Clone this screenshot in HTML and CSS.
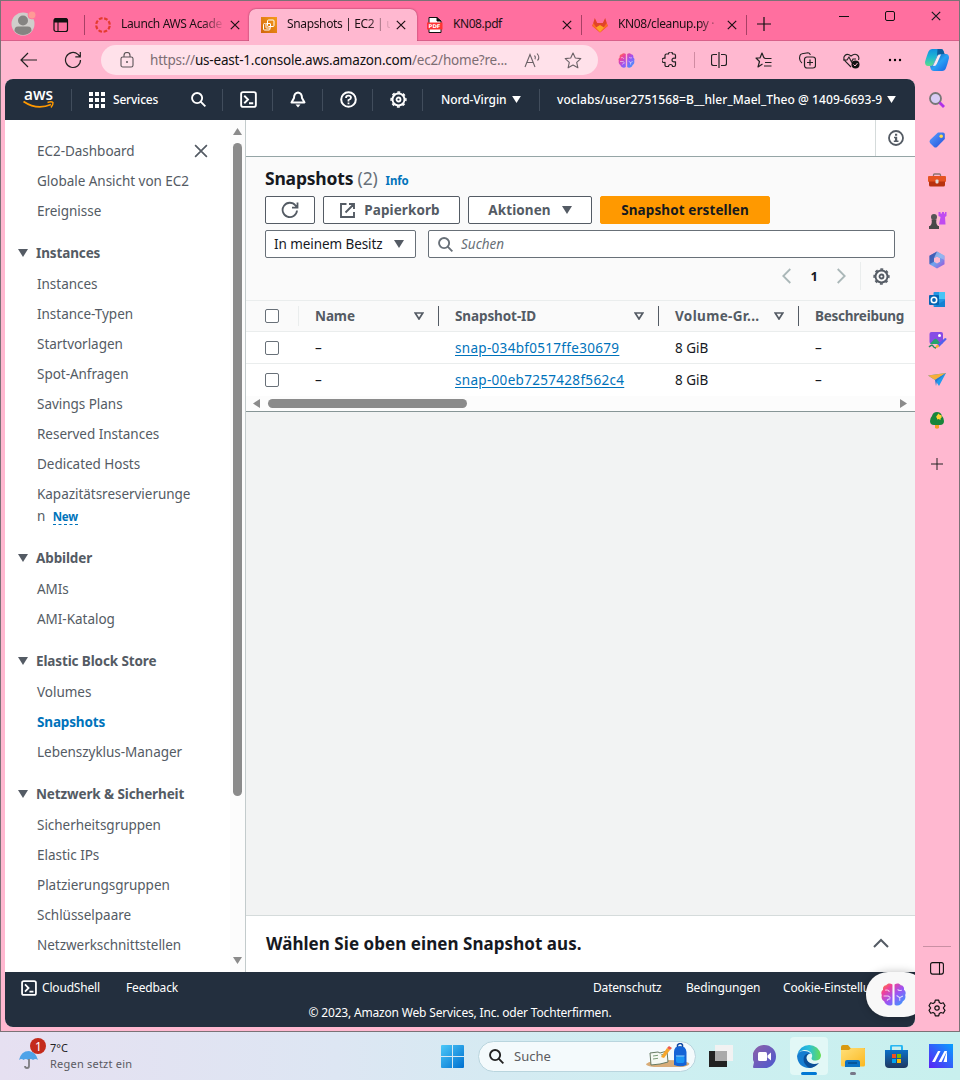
FILE: index.html
```html
<!DOCTYPE html>
<html lang="de">
<head>
<meta charset="utf-8">
<title>Snapshots | EC2</title>
<link rel="stylesheet" href="styles.css">
</head>
<body>
<svg class="defs" width="0" height="0">
  <defs>
    <linearGradient id="g-brain" x1="0" y1="0" x2="1" y2="1"><stop offset="0" stop-color="#ff8a2a"/><stop offset=".25" stop-color="#f0409a"/><stop offset=".55" stop-color="#9a55f5"/><stop offset="1" stop-color="#2aa5ff"/></linearGradient>
    <linearGradient id="g-cop1" x1="0" y1="0" x2="0" y2="1"><stop offset="0" stop-color="#1190e0"/><stop offset=".5" stop-color="#20b8d0"/><stop offset="1" stop-color="#5ddc8a"/></linearGradient>
    <linearGradient id="g-cop2" x1="0" y1="0" x2="1" y2="1"><stop offset="0" stop-color="#0a4f9a"/><stop offset=".5" stop-color="#2aa0f5"/><stop offset="1" stop-color="#1560e0"/></linearGradient>
    <linearGradient id="g-blue" x1="0" y1="0" x2="1" y2="1"><stop offset="0" stop-color="#5aa0ff"/><stop offset="1" stop-color="#2350d8"/></linearGradient>
    <linearGradient id="g-ec2" x1="0" y1="1" x2="1" y2="0"><stop offset="0" stop-color="#d0660a"/><stop offset="1" stop-color="#f79a1c"/></linearGradient>
    <linearGradient id="g-m365" x1="0" y1="0" x2="1" y2="1"><stop offset="0" stop-color="#3a55b8"/><stop offset=".5" stop-color="#6fa6ee"/><stop offset="1" stop-color="#a04bd8"/></linearGradient>
    <linearGradient id="g-win" x1="0" y1="0" x2="1" y2="1"><stop offset="0" stop-color="#4cc8f8"/><stop offset="1" stop-color="#0070d0"/></linearGradient>
    <linearGradient id="g-edge" x1="0" y1="0" x2="1" y2="0"><stop offset="0" stop-color="#1b9de0"/><stop offset=".5" stop-color="#2cc0d8"/><stop offset="1" stop-color="#66dd50"/></linearGradient>
    <linearGradient id="g-chat" x1="0" y1="0" x2="1" y2="1"><stop offset="0" stop-color="#8f62a8"/><stop offset="1" stop-color="#4a58d0"/></linearGradient>
    <linearGradient id="g-m" x1="0" y1="1" x2="1" y2="0"><stop offset="0" stop-color="#5a20f5"/><stop offset="1" stop-color="#08a0ff"/></linearGradient>
    <linearGradient id="g-store" x1="0" y1="0" x2="0" y2="1"><stop offset="0" stop-color="#0a70c8"/><stop offset="1" stop-color="#203860"/></linearGradient>
    <linearGradient id="g-folder" x1="0" y1="0" x2="1" y2="1"><stop offset="0" stop-color="#ffe07a"/><stop offset="1" stop-color="#fbb820"/></linearGradient>
  </defs>
  <symbol id="brain" viewBox="0 0 24 22">
    <path fill="url(#g-brain)" d="M11 1.500C9 0 6.500 0 5 2 2.500 2 1.500 4.500 2 6.500 0 8 0 10 .8 11.500 0 14 1 16.500 3 17.500 4 21 8.500 23 11 20.500zM13 1.500C15 0 17.500 0 19 2c2.500 0 3.500 2.500 3 4.500 2 1.500 2 3.500 1.200 5 .8 2.500-.2 5-2.200 6-1 3.500-5.500 5.500-8 3z"/>
    <path fill="none" stroke="#fff" stroke-opacity=".75" stroke-width="1" d="M4 7c2-1 3.500 0 4 1.500M2.500 12.500H7l2 1.500M6 17c0-1.500 1-2 3-2M20 7c-2 .3-3.500.5-4-1M21 12.500l-3 1.500-3-2M18 17v-3"/>
  </symbol>
  <symbol id="shell" viewBox="0 0 18 18"><rect x="1.200" y="1.200" width="15.600" height="15.600" rx="2" fill="none" stroke="currentColor" stroke-width="2"/><path d="M4.500 5l4 4-4 4M9.500 13H14" fill="none" stroke="currentColor" stroke-width="2"/></symbol>
  <symbol id="gear" viewBox="0 0 17 17"><g fill="none" stroke="currentColor"><circle cx="8.500" cy="8.500" r="6" stroke-width="1.900"/><circle cx="8.500" cy="8.500" r="7.400" stroke-width="1.500" stroke-dasharray="2.900 2.912" transform="rotate(-11 8.500 8.500)"/><circle cx="8.500" cy="8.500" r="2" stroke-width="1.800"/></g></symbol>
  <symbol id="close" viewBox="0 0 10 10"><path d="M.8.8l8.400 8.400M9.200.8L.8 9.200" stroke="currentColor" fill="none" stroke-width="1.200"/></symbol>
  <symbol id="caret" viewBox="0 0 10 8"><path d="M0 0h10L5 8z" fill="currentColor"/></symbol>
  <symbol id="sort" viewBox="0 0 10 8"><path d="M1.200 1h7.600L5 7z" fill="none" stroke="currentColor" stroke-width="1.700"/></symbol>
  <symbol id="search" viewBox="0 0 16 16"><circle cx="6.500" cy="6.500" r="5.400" fill="none" stroke="currentColor" stroke-width="2"/><path d="M10.300 10.300L15.300 15.300" stroke="currentColor" stroke-width="2"/></symbol>
</svg>

<div class="window">
  <div class="tabstrip">
    <div class="profile">
      <svg width="26" height="26" viewBox="0 0 26 26"><circle cx="12" cy="14" r="11.500" fill="#d0cecb"/><circle cx="12" cy="10.500" r="5" fill="#858482"/><path d="M3.500 21c0-4 2-4.500 4-4.500h9c2 0 4 .5 4 4.500a11 11 0 0 1-17 0z" fill="#858482"/><circle cx="21" cy="5" r="4" fill="#ff9a96" stroke="#ff6f9f" stroke-width=".8"/></svg>
    </div>
    <div class="workspace">
      <svg width="16" height="16" viewBox="0 0 16 16"><rect x="1" y="1.500" width="13.500" height="13" rx="2" fill="none" stroke="#111" stroke-width="1.200"/><path d="M1 2.500Q1 1 3 1h9.500Q14.500 1 14.500 3v2.500H1z" fill="#111"/><path d="M5 5v9" stroke="#111"/></svg>
    </div>
    <div class="tab tab-first">
      <svg width="16" height="16" viewBox="0 0 16 16"><circle cx="8" cy="8" r="6.800" fill="none" stroke="#e43b2f" stroke-width="2.200" stroke-dasharray="3.700 1.640" transform="rotate(8 8 8)"/></svg>
      <span class="tab-title fade">Launch AWS Acade</span>
      <svg class="x" width="10" height="10"><use href="#close"/></svg>
    </div>
    <div class="tab tab-active">
      <svg width="16" height="16" viewBox="0 0 16 16"><rect width="16" height="16" fill="url(#g-ec2)"/><g fill="none" stroke="#fff" stroke-width="1"><rect x="6.500" y="3" width="6.500" height="6.500" rx="1"/><path d="M4.500 6.500H3.500q-1 0-1 1v4.500q0 1 1 1H8q1 0 1-1v-1"/><rect x="5" y="6.500" width="4.500" height="4.500" rx=".5"/></g></svg>
      <span class="tab-title fade">Snapshots | EC2 | us</span>
      <svg class="x" width="10" height="10"><use href="#close"/></svg>
    </div>
    <div class="tab">
      <svg width="16" height="16" viewBox="0 0 16 16"><path d="M2 .5h8L14 4v11.500H2z" fill="#fff" stroke="#111"/><path d="M10 .5V4h4" fill="#111" stroke="#111"/><rect y="5.500" width="15.500" height="7" fill="#f33"/><text x="1.500" y="11" textLength="12" lengthAdjust="spacingAndGlyphs" class="pdf">PDF</text></svg>
      <span class="tab-title plain">KN08.pdf</span>
      <svg class="x" width="10" height="10"><use href="#close"/></svg>
    </div>
    <div class="tab tab-sep">
      <svg width="16" height="16" viewBox="0 0 16 16"><path d="M.3 9L2.800 1l2.400 5h5.600l2.400-5 2.500 8L8 15.500z" fill="#e24329"/><path d="M.3 9l1-3L8 15.500zM15.700 9l-1-3L8 15.500z" fill="#fc6d26"/><path d="M4 10.500L8 8l4 2.500-4 5z" fill="#fca326"/></svg>
      <span class="tab-title fade">KN08/cleanup.py ·</span>
      <svg class="x" width="10" height="10"><use href="#close"/></svg>
    </div>
    <div class="newtab"><svg width="14" height="14" viewBox="0 0 14 14"><path d="M7 0v14M0 7h14" stroke="#111" stroke-width="1.200"/></svg></div>
    <div class="winctl">
      <svg width="10" height="10"><path d="M0 5.500h10" stroke="#111"/></svg>
      <svg width="10" height="10"><rect x=".5" y=".5" width="9" height="9" rx="1.500" fill="none" stroke="#111"/></svg>
      <svg width="10" height="10"><use href="#close"/></svg>
    </div>
  </div>

  <div class="toolbar">
    <div class="tool"><svg width="18" height="16" viewBox="0 0 18 16"><path d="M8 1L1 8l7 7M1 8h16" fill="none" stroke="#222" stroke-width="1.200"/></svg></div>
    <div class="tool"><svg width="18" height="18" viewBox="0 0 18 18"><path d="M16.500 9A7.500 7.500 0 1 1 14 3.400L16 5.500M16.300 1v4.800h-5" fill="none" stroke="#222" stroke-width="1.200"/></svg></div>
    <div class="address">
      <svg class="lock" width="14" height="16" viewBox="0 0 14 16"><rect x="1" y="5" width="12" height="10" rx="1.800" fill="none" stroke="#5c5458" stroke-width="1.100"/><path d="M4 5V3.500a3 3 0 0 1 6 0V5" fill="none" stroke="#5c5458" stroke-width="1.100"/><circle cx="7" cy="10" r="1" fill="#5c5458"/></svg>
      <span class="url">https://<b>us-east-1.console.aws.amazon.com</b>/ec2/home?re...</span>
      <svg class="read" width="18" height="16" viewBox="0 0 18 16"><path d="M1 15L6 2.500 11 15M3 10.500h6M10.500 3.500q1.500 1.500.5 3.700M13 1.500q3.500 4 .5 7" fill="none" stroke="#6b6267" stroke-width="1.100"/></svg>
      <svg class="star" width="18" height="17" viewBox="0 0 18 17"><path d="M9 1l2.300 5 5.500.6-4.100 3.700 1.200 5.500L9 13l-4.900 2.800 1.200-5.500L1.200 6.600l5.500-.6z" fill="none" stroke="#6b6267" stroke-width="1.100" stroke-linejoin="round"/></svg>
    </div>
    <div class="tool"><svg width="17" height="15"><use href="#brain"/></svg></div>
    <div class="tool"><svg width="16" height="16" viewBox="0 0 16 16"><path d="M4.500 2H6.500a2 2 0 0 1 4 0H12q1.500 0 1.500 1.500v2.700h-1a1.900 1.900 0 1 0 0 3.600h1v3.200q0 1.500-1.500 1.500h-1.500a2 2 0 0 0-4 0h-2Q3 14.500 3 13v-2.700a2.200 2.200 0 1 1 0-4V3.500Q3 2 4.500 2z" fill="none" stroke="#222" stroke-width="1.200" stroke-linejoin="round"/></svg></div>
    <div class="tooldiv"></div>
    <div class="tool split-icon"><svg width="16" height="16" viewBox="0 0 16 16"><path d="M6 2.500H2.500q-2 0-2 2v7q0 2 2 2H6M10 2.500h3.500q2 0 2 2v7q0 2-2 2H10M8 0v16" fill="none" stroke="#222" stroke-width="1.200"/></svg></div>
    <div class="tool"><svg width="17" height="16" viewBox="0 0 17 16"><path d="M10 6.500L8.800 5.500 7 1 5 6H1l3.500 3.500L3 15l4.500-3M10 6.500h6.500M10 10.500h6.500M9 14h7.500" fill="none" stroke="#222" stroke-width="1.200" stroke-linejoin="round"/></svg></div>
    <div class="tool"><svg width="17" height="17" viewBox="0 0 17 17"><path d="M3 11Q.5 9 .5 6L1 3.500Q1.500 2 3 1.800l6-1q2 0 2.300 2.200" fill="none" stroke="#222" stroke-width="1.100"/><rect x="5.500" y="5" width="11" height="11" rx="2.500" fill="none" stroke="#222" stroke-width="1.200"/><path d="M11 7.500v6M8 10.500h6" stroke="#222" stroke-width="1.200"/></svg></div>
    <div class="tool"><svg width="17" height="17" viewBox="0 0 17 17"><path d="M8 15L2 9C-1 5 3 0 8 4c5-4 9 0 7.500 4M0 8h4l2-3 2.500 5L10 7h3" fill="none" stroke="#222" stroke-width="1.100"/><circle cx="12.500" cy="12.500" r="4" fill="#111"/><path d="M10.500 12.500l1.500 1.500 2.500-3" fill="none" stroke="#ffb8d0"/></svg></div>
    <div class="tool"><svg width="14" height="4"><circle cx="2" cy="2" r="1.200"/><circle cx="7" cy="2" r="1.200"/><circle cx="12" cy="2" r="1.200"/></svg></div>
    <div class="tool copilot"><svg width="24" height="24" viewBox="0 0 24 24"><path d="M7 1h9q2 0 2.500 2l1 3h-5q-2 0-3 3L9 15q-1 3-4 3H3q-3 0-3-4Q2 7 3.500 3.500 4.500 1 7 1z" fill="url(#g-cop1)"/><path d="M17 23H9q-3 0-3.500-3L5 18q3 0 4-3l2.500-6q1-3 3-3H21q3 0 3 4-1.500 6-3 10-1 3-4 3z" fill="url(#g-cop2)"/><path d="M12.500 1H16q2 0 2.500 2l1 3h-5q-1.500 0-2.500 2z" fill="#0f5c9c"/><path d="M12.500 8q.5-1.500 2.500-1.500h1l-4 9q-1 2.500-3 2.500H8z" fill="#fde8ee"/></svg></div>
  </div>

  <div class="body">
    <div class="app">
      <header class="awsnav">
        <div class="cell logo"><svg width="32" height="21" viewBox="0 0 32 21"><text x="1" y="10.500" textLength="29" lengthAdjust="spacingAndGlyphs" class="awstext">aws</text><path d="M.5 12.500q13.500 9 27.500 3" fill="none" stroke="#f90" stroke-width="1.800"/><path d="M24.500 13.500q4-1.500 5.500 0 .3 2-2 5" fill="none" stroke="#f90" stroke-width="1.400"/></svg></div>
        <div class="cell services"><svg width="16" height="16" viewBox="0 0 16 16"><path d="M0 0h4v4H0zM6 0h4v4H6zM12 0h4v4h-4zM0 6h4v4H0zM6 6h4v4H6zM12 6h4v4h-4zM0 12h4v4H0zM6 12h4v4H6zM12 12h4v4h-4z" fill="#fff"/></svg><span>Services</span></div>
        <div class="cell icon find"><svg width="15" height="15"><use href="#search"/></svg></div>
        <div class="cell icon"><svg width="17" height="17"><use href="#shell"/></svg></div>
        <div class="cell icon"><svg width="16" height="17" viewBox="0 0 16 17"><path d="M8 1.500Q12 2 12 7l2.500 4.500h-13L4 7q0-5 4-5.500z" fill="none" stroke="#fff" stroke-width="2" stroke-linejoin="round"/><path d="M5.500 13.500h5L8 16.500z" fill="#fff"/></svg></div>
        <div class="cell icon"><svg width="17" height="17" viewBox="0 0 17 17"><circle cx="8.500" cy="8.500" r="7.300" fill="none" stroke="#fff" stroke-width="2"/><path d="M6 7q0-2.300 2.500-2.300T11 6.800Q11 8 8.500 9v1.500M8.500 11.500v1.700" fill="none" stroke="#fff" stroke-width="1.800"/></svg></div>
        <div class="cell icon"><svg width="17" height="17"><use href="#gear"/></svg></div>
        <div class="cell region"><span>Nord-Virgin</span><svg width="9" height="7"><use href="#caret"/></svg></div>
        <div class="cell account"><span>voclabs/user2751568=B__hler_Mael_Theo @ 1409-6693-9</span><svg width="9" height="7"><use href="#caret"/></svg></div>
      </header>

      <div class="content">
        <nav class="sidenav">
          <div class="navlist">
            <div class="navtop"><a class="item">EC2-Dashboard</a><svg width="14" height="14"><use href="#close"/></svg></div>
            <a class="item">Globale Ansicht von EC2</a>
            <a class="item">Ereignisse</a>
            <h3><svg width="10" height="8"><use href="#caret"/></svg>Instances</h3>
            <a class="item">Instances</a>
            <a class="item">Instance-Typen</a>
            <a class="item">Startvorlagen</a>
            <a class="item">Spot-Anfragen</a>
            <a class="item">Savings Plans</a>
            <a class="item">Reserved Instances</a>
            <a class="item">Dedicated Hosts</a>
            <a class="item">Kapazitätsreservierunge<br>n <span class="new">New</span></a>
            <h3><svg width="10" height="8"><use href="#caret"/></svg>Abbilder</h3>
            <a class="item">AMIs</a>
            <a class="item">AMI-Katalog</a>
            <h3><svg width="10" height="8"><use href="#caret"/></svg>Elastic Block Store</h3>
            <a class="item">Volumes</a>
            <a class="item current">Snapshots</a>
            <a class="item">Lebenszyklus-Manager</a>
            <h3><svg width="10" height="8"><use href="#caret"/></svg>Netzwerk &amp; Sicherheit</h3>
            <a class="item">Sicherheitsgruppen</a>
            <a class="item">Elastic IPs</a>
            <a class="item">Platzierungsgruppen</a>
            <a class="item">Schlüsselpaare</a>
            <a class="item">Netzwerkschnittstellen</a>
          </div>
          <div class="vscroll">
            <svg width="9" height="7" viewBox="0 0 9 7"><path d="M0 7L4.500 0 9 7z" fill="#8b8b8b"/></svg>
            <div class="vthumb"></div>
            <svg width="9" height="7" viewBox="0 0 9 7"><path d="M0 0l4.500 7L9 0z" fill="#8b8b8b"/></svg>
          </div>
        </nav>

        <main class="main">
          <div class="crumbs"><div class="infobtn"><svg width="16" height="16" viewBox="0 0 16 16"><circle cx="8" cy="8" r="7" fill="none" stroke="currentColor" stroke-width="1.800"/><path d="M7 3.800h2.200v2H7zM6 6.800h3.200v3.800h1.300v1.500H5.800v-1.500H7V8.200H6z" fill="currentColor"/></svg></div></div>
          <section class="panel">
            <div class="title"><h1>Snapshots <span>(2)</span></h1><a>Info</a></div>
            <div class="actions">
              <div class="btn refresh"><svg width="18" height="18" viewBox="0 0 18 18"><path d="M16 9.500A7.200 7.200 0 1 1 14.500 4.500L16 6.500M16.500 1.500v5.200h-5.500" fill="none" stroke="currentColor" stroke-width="1.800"/></svg></div>
              <div class="btn bin"><svg width="15" height="15" viewBox="0 0 15 15"><path d="M6.500 1H1v13h13V9M9 1h5v5M14 1L5.500 9.500" fill="none" stroke="currentColor" stroke-width="1.900"/></svg>Papierkorb</div>
              <div class="btn act">Aktionen<svg width="10" height="8"><use href="#caret"/></svg></div>
              <div class="btn primary">Snapshot erstellen</div>
            </div>
            <div class="filters">
              <div class="select">In meinem Besitz<svg width="10" height="8"><use href="#caret"/></svg></div>
              <div class="searchbox"><svg width="15" height="15"><use href="#search"/></svg>Suchen</div>
            </div>
            <div class="paging">
              <svg width="9" height="16" viewBox="0 0 9 16"><path d="M8.300 1L1.300 8l7 7" fill="none" stroke="#aab7b8" stroke-width="1.800"/></svg>
              <b>1</b>
              <svg width="9" height="16" viewBox="0 0 9 16"><path d="M.7 1l7 7-7 7" fill="none" stroke="#aab7b8" stroke-width="1.800"/></svg>
              <div class="prefs"><svg width="17" height="17"><use href="#gear"/></svg></div>
            </div>
            <div class="row head">
              <div class="c0"><i class="check"></i></div>
              <div class="c"><span>Name</span><svg width="10" height="8"><use href="#sort"/></svg></div>
              <div class="c"><span>Snapshot-ID</span><svg width="10" height="8"><use href="#sort"/></svg></div>
              <div class="c"><span class="vol">Volume-Gr...</span><svg width="10" height="8"><use href="#sort"/></svg></div>
              <div class="c last"><span>Beschreibung</span></div>
            </div>
            <div class="row">
              <div class="c0"><i class="check"></i></div><div class="c">–</div><div class="c"><a>snap-034bf0517ffe30679</a></div><div class="c">8 GiB</div><div class="c">–</div>
            </div>
            <div class="row lastrow">
              <div class="c0"><i class="check"></i></div><div class="c">–</div><div class="c"><a>snap-00eb7257428f562c4</a></div><div class="c">8 GiB</div><div class="c">–</div>
            </div>
            <div class="hscroll">
              <svg width="7" height="9" viewBox="0 0 7 9"><path d="M7 0v9L0 4.500z" fill="#8b8b8b"/></svg>
              <div class="hthumb"></div>
              <svg class="right" width="7" height="9" viewBox="0 0 7 9"><path d="M0 0v9l7-4.500z" fill="#8b8b8b"/></svg>
            </div>
          </section>
          <div class="blank"></div>
          <section class="split"><h2>Wählen Sie oben einen Snapshot aus.</h2><svg width="16" height="10" viewBox="0 0 16 10"><path d="M1 9l7-7 7 7" fill="none" stroke="#545b64" stroke-width="2"/></svg></section>
        </main>
      </div>

      <footer class="foot">
        <div class="footrow"><svg width="16" height="16"><use href="#shell"/></svg><span class="f1">CloudShell</span><span class="f2">Feedback</span><span class="f3">Datenschutz</span><span class="f4">Bedingungen</span><span class="f5">Cookie-Einstellungen</span></div>
        <div class="copy"><span>© 2023, Amazon Web Services, Inc. oder Tochterfirmen.</span></div>
      </footer>
      <div class="bubble"><svg width="25" height="23"><use href="#brain"/></svg></div>
    </div>

    <aside class="edgebar">
      <div><svg width="18" height="18" viewBox="0 0 18 18"><circle cx="7.500" cy="7.500" r="5.500" fill="#d8ccf5" stroke="#777" stroke-width="1.800"/><path d="M11.500 11.500l4.500 4.500" stroke="#b030e8" stroke-width="2.800"/></svg></div>
      <div><svg width="18" height="18" viewBox="0 0 18 18"><path d="M10 1.500h5q1.800 0 1.800 1.800V8L9 16q-1.500 1-3 0L2 12q-1-1.500 0-3z" fill="url(#g-blue)"/><circle cx="13.200" cy="5.300" r="1.800" fill="#ffd84a"/></svg></div>
      <div><svg width="18" height="18" viewBox="0 0 18 18"><path d="M5.500 6V4q0-1 1-1h5q1 0 1 1v2" fill="none" stroke="#8b7470" stroke-width="1.300"/><rect y="5" width="18" height="6" rx="1" fill="#e65322"/><path d="M1 10.500h16V14q0 1.500-1.500 1.500h-13Q1 15.500 1 14z" fill="#b8320f"/><rect x="7.500" y="8.500" width="3" height="4" rx="1" fill="#ddd"/></svg></div>
      <div><svg width="19" height="19" viewBox="0 0 19 19"><path d="M10.500 1h2v1.500h1.500V1h2v1.500H17V1h1.500v4l-1.500 1 .5 7.500H11L12.500 6l-2-1z" fill="#c04bf0"/><circle cx="6" cy="6" r="3" fill="#555"/><path d="M3.500 8.500h5q-1 4 1.500 6.500h1v3H1v-3h1q2.500-2.500 1.500-6.500z" fill="#484848"/></svg></div>
      <div><svg width="18" height="18" viewBox="0 0 18 18"><path d="M9 .5l7.500 4.300v8.400L9 17.500 1.500 13.200V4.800zM9 5.500L6 7.200v3.600L9 12.500l3-1.700V7.200z" fill="url(#g-m365)" fill-rule="evenodd"/><path d="M9 .5L6 7.200v3.600L1.500 13V4.800z" fill="#3c58ae" opacity=".75"/><path d="M16.500 4.800V9L9 5.500 6 7.200 9 .5z" fill="#a7c4f2" opacity=".6"/></svg></div>
      <div><svg width="18" height="18" viewBox="0 0 18 18"><rect x="5.500" y="1" width="11.500" height="15" rx="1" fill="#2496e4"/><path d="M11 1h6v7h-6z" fill="#48c4f5"/><path d="M5.500 16L17 9v7z" fill="#1681d2"/><rect x="1" y="4" width="10" height="10" rx="1" fill="#0764b2"/><circle cx="6" cy="9" r="2.700" fill="none" stroke="#fff" stroke-width="1.600"/></svg></div>
      <div><svg width="19" height="19" viewBox="0 0 19 19"><rect x="1.500" y="1" width="13.500" height="12" rx="2" fill="#874be5"/><path d="M2 13l4-4.500q1.500-1.500 3 0l4 4.500z" fill="#24a36c"/><circle cx="11.500" cy="4.500" r="1.500" fill="#fff"/><path d="M9 14l8-7q2 0 1.500 1.500L11 16z" fill="#5260ed"/><path d="M7 17.500q1-4.500 3.500-3.500 2 2-3.500 3.500z" fill="#f8b02d"/><path d="M1 16q3-3 4-1t3 2" fill="none" stroke="#278a62" stroke-width="1.500"/></svg></div>
      <div><svg width="18" height="18" viewBox="0 0 18 18"><path d="M0 4.500l18-2.500-7 13-4-6z" fill="#219bed"/><path d="M0 4.500l18-2.500L7 9z" fill="#f7ae39"/><path d="M7 9l11-7-9 8-1 5z" fill="#2a78cf"/></svg></div>
      <div><svg width="16" height="19" viewBox="0 0 16 19"><path d="M6 12h4v5q-2 1.500-4 0z" fill="#f49d22"/><path d="M8 1q4 0 5 4 2 2 2 5 0 4-4 4H5q-4 0-4-4 0-3 2-5 1-4 5-4z" fill="#18853b"/><path d="M9.500 2.500l1.500 1.500h1.500v1.500L13 6l-1.500 1.500V9L9.500 8 8 8.500V7L7 6l1-1.500z" fill="#ffd232"/></svg></div>
      <div class="plus"><svg width="12" height="12"><path d="M6 0v12M0 6h12" stroke="#222"/></svg></div>
      <div class="bottom"><svg width="14" height="13" viewBox="0 0 14 13"><rect x=".6" y=".6" width="12.800" height="11.500" rx="2" fill="none" stroke="#111" stroke-width="1.100"/><path d="M9.500.5v12" stroke="#111" stroke-width="1.100"/></svg></div>
      <div><svg width="18" height="18" viewBox="0 0 18 18"><path d="M7.300 1.200h3.400l.6 2.300 1.700 1 2.300-.7L17 6.700 15.300 9l1.700 2.300-1.700 2.900-2.300-.7-1.700 1-.6 2.300H7.300l-.6-2.300-1.700-1-2.300.7L1 11.300 2.700 9 1 6.700l1.700-2.900 2.300.7 1.700-1z" fill="none" stroke="#111" stroke-width="1.200" stroke-linejoin="round"/><circle cx="9" cy="9" r="2.200" fill="none" stroke="#111" stroke-width="1.200"/></svg></div>
    </aside>
  </div>
</div>

<div class="taskbar">
  <div class="weather">
    <svg width="28" height="32" viewBox="0 0 28 32"><path d="M1 20Q3 11 11 11q7 1 9 9-2.500-2-5 0-2-2-5 0-2-2-4.500 0-2-2-4.500 0z" fill="#4fa3e8"/><path d="M11 19v7q0 2-2 2t-2-2" fill="none" stroke="#7d7d80" stroke-width="1.800"/><circle cx="20" cy="6" r="8" fill="#c42b1c"/><text x="17" y="10.500" class="badge">1</text></svg>
    <div><div class="temp">7°C</div><div class="rain">Regen setzt ein</div></div>
  </div>
  <svg class="start" width="23" height="23" viewBox="0 0 23 23"><path d="M0 1q0-1 1-1h10v11H0zM12 0h10q1 0 1 1v10H12zM0 12h11v11H1q-1 0-1-1zM12 12h11v10q0 1-1 1H12z" fill="url(#g-win)"/></svg>
  <div class="tasksearch">
    <svg width="15" height="15" class="dark"><use href="#search"/></svg><span>Suche</span>
    <svg class="art" width="46" height="26" viewBox="0 0 46 26"><path d="M1 21q4-4 21-4t22 3q2 2-6 4H9q-8-1-8-3z" fill="#d8ac78"/><path d="M5 10l8-1 2 1 7-2 1 11-8 2-9 1z" fill="#f5f8f2" stroke="#667a62" stroke-width="1"/><path d="M8 13l5-.7M8 16l5-.7M16 12l4-1" stroke="#7c9d78"/><path d="M16 14l6-9 3 2-6 8z" fill="#f6a62a"/><path d="M22 5l2-2 3 2-2 2z" fill="#f05a4a"/><path d="M29 22V9q0-6 6-6t6.500 6v13q-6 2.500-12.500 0z" fill="#1463d6"/><path d="M32.500 4V2q3-3 5 0v2" fill="none" stroke="#1248a0" stroke-width="1.500"/><rect x="31" y="13" width="8.500" height="7" rx="2" fill="#1b95f5"/><path d="M31 13h8.500" stroke="#8ed4ff"/></svg>
  </div>
  <svg class="tview" width="24" height="22" viewBox="0 0 24 22"><path d="M6 0h18v16H6z" fill="#f2f2f2"/><path d="M0 6h18v16H0z" fill="#222"/><path d="M6 6h12v10H6z" fill="#aaa"/></svg>
  <svg class="chat" width="23" height="23" viewBox="0 0 23 23"><path d="M11.500 0a11.500 11.500 0 1 1 0 23H1q-1 0-1-1l1-5A11.500 11.500 0 0 1 11.500 0z" fill="url(#g-chat)"/><rect x="5" y="7" width="9" height="9" rx="1.500" fill="#fff"/><path d="M14.500 10.500l3.500-3v8l-3.500-3z" fill="#fff"/></svg>
  <div class="edge"><svg width="24" height="24" viewBox="0 0 24 24"><path d="M.3 11A12 12 0 0 1 24 11q0 5-5 5.500-4 .3-4.500-2 1.500-2 .3-4.500Q12 5.500 7 6 2 7 .3 11z" fill="url(#g-edge)"/><path d="M0 12Q1 7 7 7q5 0 7 3-5-1-5 4 1 7 11 6Q16 24 12 24 1 23.500 0 12z" fill="#157dd0"/><path d="M8 11q-3 4 0 9 2 3 5 4 5-.3 9-5-5 2-9 0-4-2.500-3.500-6 .5-2.500 3-3.500Q10 9 8 11z" fill="#0a4f98"/></svg><i></i></div>
  <div class="folder"><svg width="24" height="23" viewBox="0 0 24 23"><path d="M0 2q0-2 2-2h5l2.500 3H24v8H0z" fill="#d99a12"/><path d="M0 5h8l2-2h13q1 0 1 1v16q0 1.500-1.500 1.500h-21Q0 21.500 0 20z" fill="url(#g-folder)"/><path d="M4 22v-5q0-2 2-2h11q2 0 2 2v5z" fill="#0b72c4"/><path d="M7 18h9" stroke="#074e8c" stroke-width="1.500"/></svg><i></i></div>
  <svg class="store" width="23" height="23" viewBox="0 0 23 23"><path d="M6 5V2q0-1.500 1.500-1.500h8Q17 .5 17 2v3" fill="none" stroke="#27b6f2" stroke-width="2"/><path d="M0 5h23v14q0 4-4 4H4q-4 0-4-4z" fill="url(#g-store)"/><path d="M7 9h4v4H7z" fill="#f25022"/><path d="M12 9h4v4h-4z" fill="#7fba00"/><path d="M7 14h4v4H7z" fill="#00a4ef"/><path d="M12 14h4v4h-4z" fill="#ffb900"/></svg>
  <svg class="mapp" width="24" height="24" viewBox="0 0 24 24"><rect width="24" height="24" fill="url(#g-m)"/><path d="M3 18L9 7h2.500L6 18zM9.500 18l6-11H18l-5.500 11zM16 13l2-6v11h-3.500z" fill="#fff"/></svg>
</div>
</body>
</html>
```

FILE: styles.css
```css
* { box-sizing: border-box; }
body { margin: 0; width: 960px; height: 1080px; overflow: hidden; font-family: "Noto Sans", "Open Sans", sans-serif; font-size: 13.500px; color: #16191f; }
svg { display: block; flex: none; }
.defs { position: absolute; }
.window { height: 1032px; border: 1px solid #7b7276; background: #ffb8d0; }

/* browser tabs */
.tabstrip { display: flex; height: 40px; background: #ff6f9f; border-bottom: 1px solid #d9608a; }
.profile { width: 36px; padding: 9px 0 0 10px; }
.workspace { width: 48px; padding: 16px 0 0 16px; }
.tab { position: relative; display: flex; align-items: center; width: 165px; height: 32px; margin-top: 8px; padding-left: 10px; font: 12px "Noto Sans", sans-serif; letter-spacing: -.35px; color: #1c1014; }
.tab-first { width: 164px; }
.tab-first::before, .tab-sep::before, .tab-sep::after { content: ""; position: absolute; left: -1px; top: 6px; width: 1px; height: 20px; background: #a84065; }
.tab-sep::after { left: auto; right: 0; }
.tab-active { width: 168px; padding-left: 12px; background: #ffb8d0; border-radius: 7px 7px 0 0; box-shadow: 0 0 2px #8a3353; clip-path: inset(-3px -3px 0 -3px); }
.tab-title { width: 103px; margin-left: 10px; line-height: 16px; position: relative; top: -1px; white-space: nowrap; }
.fade { -webkit-mask-image: linear-gradient(to right, #000 78%, rgba(0,0,0,.15) 98%); mask-image: linear-gradient(to right, #000 78%, rgba(0,0,0,.15) 98%); }
.plain { letter-spacing: -.45px; }
.x { margin-left: 6px; }
.pdf { font: bold 5px "DejaVu Sans", sans-serif; letter-spacing: 0; fill: #fff; }
.newtab { padding: 16px 0 0 10px; width: 67px; }
.winctl { display: flex; gap: 36px; margin-left: 25px; padding-top: 10px; }

/* browser toolbar */
.toolbar { display: flex; align-items: center; height: 38px; padding-left: 6px; }
.tool { width: 44px; display: flex; justify-content: center; }
.copilot { width: 40px; }
.tooldiv { width: 5px; height: 16px; background: linear-gradient(#d08ba2, #d08ba2) 2px 0 / 1px 100% no-repeat; }
.address { display: flex; align-items: center; width: 497px; height: 30px; margin: 0 6px; padding-left: 19px; border-radius: 15px; background: #ffe1ea; }
.url { width: 374px; margin-left: 16px; font-size: 13.500px; letter-spacing: -.2px; white-space: nowrap; color: #7c6d73; }
.url b { font-weight: 400; color: #111; }
.star { margin-left: 22px; }

.body { display: flex; height: 948px; padding-left: 4px; }
.app { position: relative; width: 910px; height: 948px; border-radius: 8px; overflow: hidden; display: flex; flex-direction: column; background: #fff; }
.edgebar { display: flex; flex-direction: column; width: 44px; height: 948px; padding-top: 1px; }
.edgebar > div { height: 40px; flex: none; display: flex; align-items: center; justify-content: center; }
.edgebar .plus { height: 48px; }
.edgebar .bottom { margin: auto 8px 0; height: 43px; border-top: 1px solid #c990a4; }
.edgebar > div:last-child { height: 38px; }

/* console header */
.awsnav { display: flex; align-items: center; height: 41px; flex: none; background: #232f3e; color: #fff; font-size: 12px; font-weight: 500; }
.cell { display: flex; align-items: center; height: 22px; border-right: 1px solid #414d5c; white-space: nowrap; }
.logo { width: 67px; padding-left: 18px; }
.awstext { font: 600 16px "Open Sans", sans-serif; fill: #fff; }
.services { width: 101px; padding-left: 17px; gap: 8px; border: 0; letter-spacing: -.2px; }
.icon { width: 50px; justify-content: center; padding-left: 1px; }
.find { padding-left: 2px; }
.region { width: 117px; padding-left: 18px; letter-spacing: -.1px; }
.region span { width: 71px; }
.account { width: 375px; padding-left: 17px; border: 0; letter-spacing: .06px; }
.account span { width: 330px; }

.content { display: flex; height: 852px; }
.sidenav { display: flex; width: 241px; border-right: 1px solid #c3cbcc; overflow: hidden; }
.navlist { width: 225px; padding: 16px 0 0 32px; color: #545b64; }
.navtop { display: flex; align-items: center; color: #545b64; }
.navtop .item { width: 157px; }
.item { display: block; padding: 4px 0; line-height: 22px; white-space: nowrap; letter-spacing: -.03px; }
.current { color: #0073bb; font-weight: 700; letter-spacing: -.15px; }
.new { margin-left: 4px; font-size: 11.500px; line-height: 15px; font-weight: 700; color: #0073bb; border-bottom: 1px dashed #0073bb; letter-spacing: -.3px; }
.sidenav h3 { display: flex; align-items: center; gap: 8px; margin: 0 0 0 -19px; padding: 16px 0 5px; line-height: 22px; font-size: 13.500px; font-weight: 700; letter-spacing: -.12px; }
.vscroll { width: 15px; display: flex; flex-direction: column; align-items: center; padding: 8px 0; background: #fcfcfc; }
.vthumb { width: 9px; height: 653px; margin: 8px 0 auto; border-radius: 5px; background: #8b8b8b; }

.main { width: 669px; display: flex; flex-direction: column; background: #f2f3f3; }
.crumbs { display: flex; justify-content: flex-end; height: 37px; background: #fff; border-bottom: 1px solid #95a5a6; }
.infobtn { display: flex; align-items: center; justify-content: center; width: 40px; border-left: 1px solid #d5dbdb; color: #545b64; }
.panel { height: 255px; background: #fafafa; border-bottom: 1px solid #879596; }
.title { display: flex; align-items: baseline; gap: 8px; height: 39px; padding: 9px 0 0 19px; }
.title h1 { margin: 0; font-size: 17.500px; line-height: 25px; letter-spacing: -.2px; }
.title h1 span { font-weight: 400; color: #687078; }
.title a { font-size: 11.500px; font-weight: 700; color: #0073bb; letter-spacing: -.1px; }
.actions { display: flex; gap: 8px; padding-left: 19px; }
.btn { display: flex; align-items: center; justify-content: center; height: 28px; border: 1px solid #545b64; border-radius: 2px; background: #fff; color: #545b64; font-weight: 700; letter-spacing: .1px; white-space: nowrap; }
.refresh { width: 50px; }
.bin { width: 137px; gap: 9px; padding-right: 3px; }
.act { width: 124px; gap: 11px; }
.primary { width: 170px; background: #f90; border-color: #f90; color: #16191f; }
.filters { display: flex; gap: 12px; padding: 6px 0 0 19px; }
.select { display: flex; align-items: center; gap: 11px; width: 151px; height: 28px; padding-left: 8px; border: 1px solid #687078; border-radius: 2px; background: #fff; white-space: nowrap; letter-spacing: -.08px; }
.select svg { color: #545b64; }
.searchbox { display: flex; align-items: center; gap: 8px; width: 467px; height: 28px; padding-left: 9px; border: 1px solid #687078; border-radius: 2px; background: #fff; color: #687078; font-style: italic; }
.paging { display: flex; align-items: center; justify-content: flex-end; height: 42px; padding: 0 25px 6px 0; }
.paging b { margin: 0 19px 0 20px; font-size: 13px; line-height: 16px; }
.prefs { display: flex; align-items: center; height: 28px; margin-left: 14px; padding-left: 12px; border-left: 1px solid #eaeded; color: #545b64; }
.row { display: grid; grid-template-columns: 53px 140px 220px 140px 116px; align-items: center; height: 32px; background: #fff; border-bottom: 1px solid #eaeded; }
.head { background: #fafafa; border-top: 1px solid #eaeded; color: #545b64; font-weight: 700; }
.lastrow { border: 0; }
.c0 { padding-left: 19px; height: 20px; display: flex; align-items: center; }
.head .c0 { border-right: 1px solid #eaeded; }
.check { width: 14px; height: 14px; border: 1px solid #687078; border-radius: 2px; background: #fff; }
.c { display: flex; align-items: center; justify-content: space-between; height: 20px; padding: 0 14px 0 16px; white-space: nowrap; }
.head .c { border-right: 1px solid #545b64; letter-spacing: -.1px; }
.head .last { border: 0; padding-right: 0; letter-spacing: -.25px; }
.head .vol { letter-spacing: .35px; }
.c a { color: #0073bb; text-decoration: underline; text-underline-offset: 2px; letter-spacing: .31px; }
.hscroll { display: flex; align-items: center; height: 15px; padding: 0 8px 0 7px; background: #fcfcfc; }
.hthumb { width: 199px; height: 9px; margin-left: 8px; border-radius: 5px; background: #8b8b8b; }
.right { margin-left: auto; }
.blank { flex: 1; }
.split { display: flex; align-items: center; justify-content: space-between; height: 57px; padding: 0 26px 2px 20px; background: #fff; border-top: 1px solid #d5dbdb; }
.split h2 { margin: 0; font-size: 17px; letter-spacing: .05px; }

.foot { height: 55px; padding-top: 6px; background: #232f3e; color: #fff; font-size: 12px; letter-spacing: -.18px; }
.footrow { display: flex; align-items: center; height: 20px; padding-left: 16px; white-space: nowrap; }
.footrow span { position: relative; top: -1px; }
.f1 { width: 84px; margin-left: 5px; }
.f2 { width: 467px; }
.f3 { width: 93px; }
.f4 { width: 97px; }
.copy { text-align: center; margin-top: 6px; line-height: 18px; }
.bubble { position: absolute; left: 861px; top: 893px; width: 60px; height: 45px; padding: 11px 0 0 15px; border-radius: 22px; background: #f8f8f8; box-shadow: 0 0 8px rgba(0,0,0,.25); }

/* taskbar */
.taskbar { display: flex; align-items: center; height: 48px; background: linear-gradient(90deg, #e6e0f1 0%, #dde6f3 35%, #cdeff1 70%, #c8f0ee 100%); }
.weather { display: flex; width: 441px; padding-left: 18px; gap: 4px; font-size: 11px; line-height: 16px; color: #222; }
.weather svg { overflow: visible; }
.rain { color: #5a5a62; letter-spacing: .22px; }
.badge { font: 12px "Noto Sans", sans-serif; fill: #fff; }
.tasksearch { display: flex; align-items: center; width: 218px; height: 31px; margin-left: 14px; padding-left: 10px; border: 1px solid #b9d5de; border-radius: 16px; background: #f4fafc; font-size: 13px; color: #5c5c60; }
.tasksearch span { width: 122px; margin-left: 10px; }
.art { margin-left: 9px; }
.dark { color: #222; }
.tview { margin-left: 13px; }
.chat { margin-left: 20px; }
.edge, .folder { position: relative; display: flex; align-items: center; justify-content: center; width: 38px; height: 38px; margin-left: 14px; border-radius: 4px; }
.edge { background: #e2f8f6; }
.edge i, .folder i { position: absolute; bottom: 0; width: 16px; height: 3px; border-radius: 2px; background: #0078d4; }
.folder { width: 24px; margin-left: 13px; }
.folder i { width: 6px; background: #778; }
.store { margin-left: 20px; }
.mapp { margin-left: 21px; }
```
